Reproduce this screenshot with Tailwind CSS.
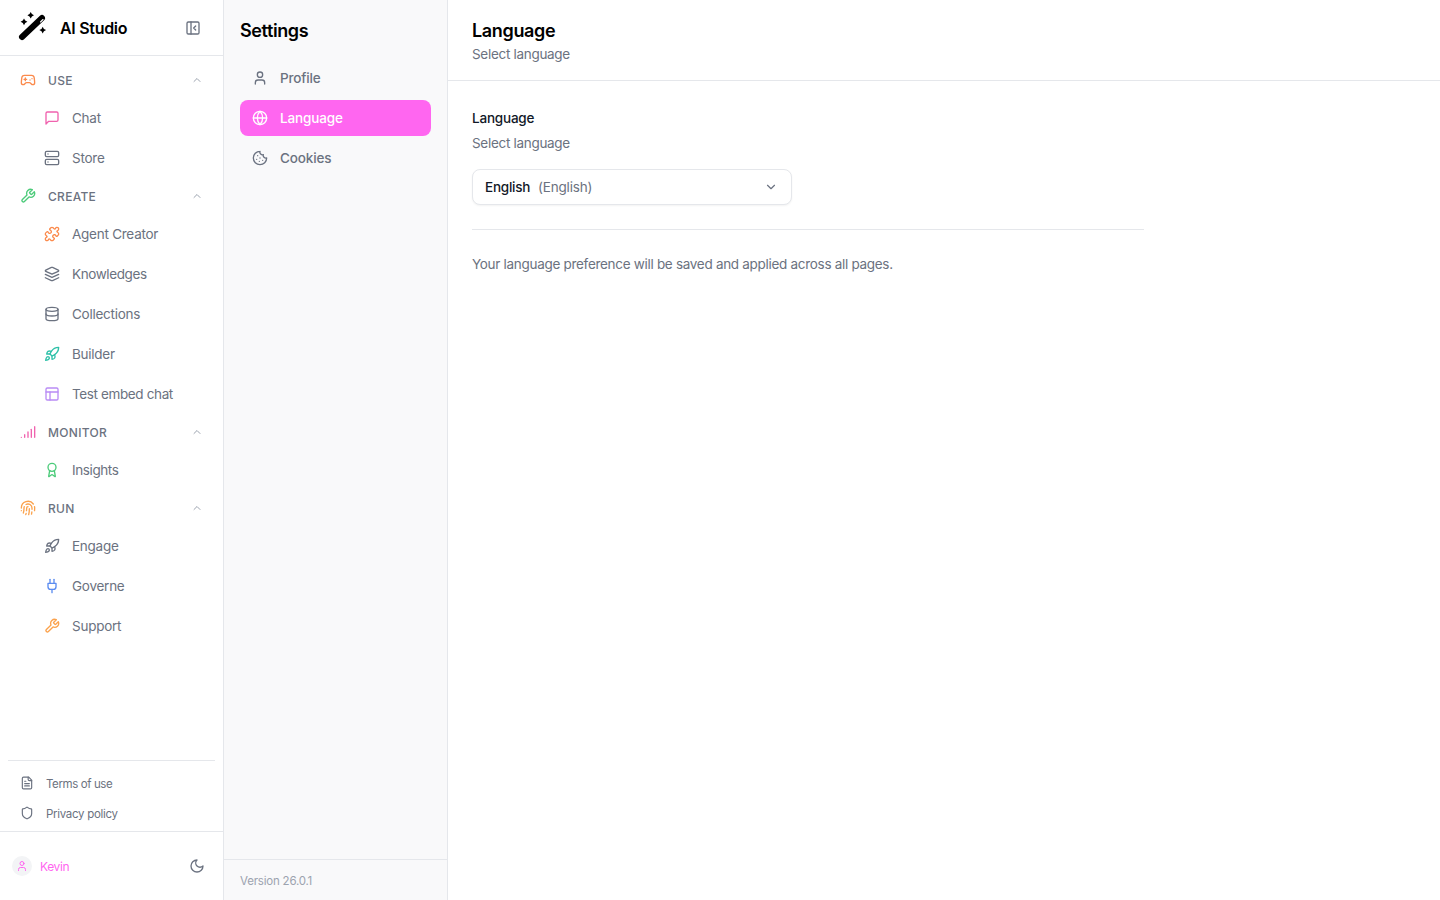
<!DOCTYPE html>
<html lang="en">
<head>
<meta charset="utf-8">
<title>AI Studio</title>
<script src="https://cdn.jsdelivr.net/npm/@tailwindcss/browser@4"></script>
</head>
<body class="bg-white">
<div class="flex h-[900px] w-[1440px] overflow-hidden bg-white font-['Inter',sans-serif] text-[#6b7280]">

  <!-- Main sidebar -->
  <aside class="flex h-full w-[224px] shrink-0 flex-col border-r border-[#e5e7eb] bg-white">
    <div class="flex h-[56px] shrink-0 items-center border-b border-[#e5e7eb] pl-[19px] pr-[22px]">
      <svg class="h-[28px] w-[28px] shrink-0 overflow-visible" viewBox="0 0 28 28" fill="#000">
        <path d="M3 23 23 4" stroke="#000" stroke-width="6" stroke-linecap="round"/>
        <path d="M21.5 8 24 5.5" stroke="#fff" stroke-width="1.1" stroke-linecap="round"/>
        <path d="M11.7-2 12.9.1 15 1.2 12.9 2.4 11.7 4.5 10.5 2.4 8.4 1.2 10.5.1Z"/>
        <path d="M5 4.4 6.2 6.6 8.4 7.8 6.2 9 5 11.2 3.8 9 1.6 7.8 3.8 6.6Z"/>
        <path d="M23.7 12.7 24.9 14.9 27.1 16 24.9 17.2 23.7 19.4 22.5 17.2 20.3 16 22.5 14.9Z"/>
      </svg>
      <span class="ml-[13px] text-[16px] font-semibold tracking-[-0.3px] text-black">AI Studio</span>
      <svg class="ml-auto h-[16px] w-[16px]" viewBox="0 0 24 24" fill="none" stroke="#6b7280" stroke-width="2" stroke-linecap="round" stroke-linejoin="round"><rect x="3" y="3" width="18" height="18" rx="2"/><path d="M9 3v18"/><path d="m16 15-3-3 3-3"/></svg>
    </div>

    <nav class="flex flex-1 flex-col pt-[6px]">
      <div class="flex h-[36px] items-center pl-[20px] pr-[20px]">
        <svg class="h-4 w-4" viewBox="0 0 24 24" fill="none" stroke="#fb8a4c" stroke-width="2" stroke-linecap="round" stroke-linejoin="round"><path d="M6 11h4"/><path d="M8 9v4"/><path d="M15 12h.01"/><path d="M18 10h.01"/><path d="M17.32 5H6.68a4 4 0 0 0-3.978 3.59c-.006.052-.01.101-.017.152C2.604 9.416 2 14.456 2 16a3 3 0 0 0 3 3c1 0 1.5-.5 2-1l1.414-1.414A2 2 0 0 1 9.828 16h4.344a2 2 0 0 1 1.414.586L17 18c.5.5 1 1 2 1a3 3 0 0 0 3-3c0-1.545-.604-6.584-.685-7.258-.007-.05-.011-.1-.017-.151A4 4 0 0 0 17.32 5z"/></svg>
        <span class="ml-3 pt-[2px] text-[12px] font-medium tracking-[0.3px] text-[#6b7280]">USE</span>
        <svg class="ml-auto h-3 w-3" viewBox="0 0 24 24" fill="none" stroke="#9ca3af" stroke-width="2" stroke-linecap="round" stroke-linejoin="round"><path d="m18 15-6-6-6 6"/></svg>
      </div>
      <a class="flex h-[40px] items-center pl-[44px] text-[13.5px] tracking-[-0.25px]">
        <svg class="mr-3 h-4 w-4 shrink-0" viewBox="0 0 24 24" fill="none" stroke="#f062ae" stroke-width="2" stroke-linecap="round" stroke-linejoin="round"><path d="M21 15a2 2 0 0 1-2 2H7l-4 4V5a2 2 0 0 1 2-2h14a2 2 0 0 1 2 2z"/></svg>Chat</a>
      <a class="flex h-[40px] items-center pl-[44px] text-[13.5px] tracking-[-0.25px]">
        <svg class="mr-3 h-4 w-4 shrink-0" viewBox="0 0 24 24" fill="none" stroke="#6b7280" stroke-width="2" stroke-linecap="round" stroke-linejoin="round"><rect x="2" y="2" width="20" height="8" rx="2"/><rect x="2" y="14" width="20" height="8" rx="2"/><path d="M6 6h.01"/><path d="M6 18h.01"/></svg>Store</a>

      <div class="flex h-[36px] items-center pl-[20px] pr-[20px]">
        <svg class="h-4 w-4" viewBox="0 0 24 24" fill="none" stroke="#4ccb7a" stroke-width="2" stroke-linecap="round" stroke-linejoin="round"><path d="M14.7 6.3a1 1 0 0 0 0 1.4l1.6 1.6a1 1 0 0 0 1.4 0l3.77-3.77a6 6 0 0 1-7.94 7.94l-6.91 6.91a2.12 2.12 0 0 1-3-3l6.91-6.91a6 6 0 0 1 7.94-7.94l-3.76 3.76z"/></svg>
        <span class="ml-3 pt-[2px] text-[12px] font-medium tracking-[0.3px]">CREATE</span>
        <svg class="ml-auto h-3 w-3" viewBox="0 0 24 24" fill="none" stroke="#9ca3af" stroke-width="2" stroke-linecap="round" stroke-linejoin="round"><path d="m18 15-6-6-6 6"/></svg>
      </div>
      <a class="flex h-[40px] items-center pl-[44px] text-[13.5px] tracking-[-0.25px]">
        <svg class="mr-3 h-4 w-4 shrink-0" viewBox="0 0 24 24" fill="none" stroke="#fb8a4c" stroke-width="2" stroke-linecap="round" stroke-linejoin="round"><path d="M19.439 7.85c-.049.322.059.648.289.878l1.568 1.568c.47.47.706 1.087.706 1.704s-.235 1.233-.706 1.704l-1.611 1.611a.98.98 0 0 1-.837.276c-.47-.07-.802-.48-.968-.925a2.501 2.501 0 1 0-3.214 3.214c.446.166.855.497.925.968a.979.979 0 0 1-.276.837l-1.61 1.61a2.404 2.404 0 0 1-1.705.707 2.402 2.402 0 0 1-1.704-.706l-1.568-1.568a1.026 1.026 0 0 0-.877-.29c-.493.074-.84.504-1.02.968a2.5 2.5 0 1 1-3.237-3.237c.464-.18.894-.527.967-1.02a1.026 1.026 0 0 0-.289-.877l-1.568-1.568A2.402 2.402 0 0 1 1.998 12c0-.617.236-1.234.706-1.704L4.23 8.77c.24-.24.581-.353.917-.303.515.077.877.528 1.073 1.01a2.5 2.5 0 1 0 3.259-3.259c-.482-.196-.933-.558-1.01-1.073-.05-.336.062-.676.303-.917l1.525-1.525A2.402 2.402 0 0 1 12 1.998c.617 0 1.234.236 1.704.706l1.568 1.568c.23.23.556.338.877.29.493-.074.84-.504 1.02-.968a2.5 2.5 0 1 1 3.237 3.237c-.464.18-.894.527-.967 1.02Z"/></svg>Agent Creator</a>
      <a class="flex h-[40px] items-center pl-[44px] text-[13.5px] tracking-[-0.4px]">
        <svg class="mr-3 h-4 w-4 shrink-0" viewBox="0 0 24 24" fill="none" stroke="#6b7280" stroke-width="2" stroke-linecap="round" stroke-linejoin="round"><path d="m12.83 2.18a2 2 0 0 0-1.66 0L2.6 6.08a1 1 0 0 0 0 1.83l8.58 3.91a2 2 0 0 0 1.66 0l8.58-3.9a1 1 0 0 0 0-1.83Z"/><path d="m22 17.65-9.17 4.16a2 2 0 0 1-1.66 0L2 17.65"/><path d="m22 12.65-9.17 4.16a2 2 0 0 1-1.66 0L2 12.65"/></svg>Knowledges</a>
      <a class="flex h-[40px] items-center pl-[44px] text-[13.5px] tracking-[-0.25px]">
        <svg class="mr-3 h-4 w-4 shrink-0" viewBox="0 0 24 24" fill="none" stroke="#6b7280" stroke-width="2" stroke-linecap="round" stroke-linejoin="round"><ellipse cx="12" cy="5" rx="9" ry="3"/><path d="M3 5V19A9 3 0 0 0 21 19V5"/><path d="M3 12A9 3 0 0 0 21 12"/></svg>Collections</a>
      <a class="flex h-[40px] items-center pl-[44px] text-[13.5px] tracking-[-0.25px]">
        <svg class="mr-3 h-4 w-4 shrink-0" viewBox="0 0 24 24" fill="none" stroke="#2dc0a8" stroke-width="2" stroke-linecap="round" stroke-linejoin="round"><path d="M4.5 16.5c-1.5 1.26-2 5-2 5s3.74-.5 5-2c.71-.84.7-2.13-.09-2.91a2.18 2.18 0 0 0-2.91-.09z"/><path d="m12 15-3-3a22 22 0 0 1 2-3.95A12.88 12.88 0 0 1 22 2c0 2.72-.78 7.5-6 11a22.35 22.35 0 0 1-4 2z"/><path d="M9 12H4s.55-3.03 2-4c1.62-1.08 5 0 5 0"/><path d="M12 15v5s3.03-.55 4-2c1.08-1.62 0-5 0-5"/></svg>Builder</a>
      <a class="flex h-[40px] items-center pl-[44px] text-[13.5px] tracking-[-0.37px]">
        <svg class="mr-3 h-4 w-4 shrink-0" viewBox="0 0 24 24" fill="none" stroke="#b98cf5" stroke-width="2" stroke-linecap="round" stroke-linejoin="round"><rect x="3" y="3" width="18" height="18" rx="2"/><path d="M3 9h18"/><path d="M9 21V9"/></svg>Test embed chat</a>

      <div class="flex h-[36px] items-center pl-[20px] pr-[20px]">
        <svg class="h-4 w-4" viewBox="0 0 24 24" fill="none" stroke="#f062ae" stroke-width="2" stroke-linecap="round" stroke-linejoin="round"><path d="M2 20h.01"/><path d="M7 20v-4"/><path d="M12 20v-8"/><path d="M17 20V8"/><path d="M22 4v16"/></svg>
        <span class="ml-3 pt-[2px] text-[12px] font-medium tracking-[0.3px]">MONITOR</span>
        <svg class="ml-auto h-3 w-3" viewBox="0 0 24 24" fill="none" stroke="#9ca3af" stroke-width="2" stroke-linecap="round" stroke-linejoin="round"><path d="m18 15-6-6-6 6"/></svg>
      </div>
      <a class="flex h-[40px] items-center pl-[44px] text-[13.5px] tracking-[-0.4px]">
        <svg class="mr-3 h-4 w-4 shrink-0" viewBox="0 0 24 24" fill="none" stroke="#4ccb7a" stroke-width="2" stroke-linecap="round" stroke-linejoin="round"><path d="m15.477 12.89 1.515 8.526a.5.5 0 0 1-.81.47l-3.58-2.687a1 1 0 0 0-1.197 0l-3.586 2.686a.5.5 0 0 1-.81-.469l1.514-8.526"/><circle cx="12" cy="8" r="6"/></svg>Insights</a>

      <div class="flex h-[36px] items-center pl-[20px] pr-[20px]">
        <svg class="h-4 w-4" viewBox="0 0 24 24" fill="none" stroke="#fba24c" stroke-width="2" stroke-linecap="round" stroke-linejoin="round"><path d="M12 10a2 2 0 0 0-2 2c0 1.02-.1 2.51-.26 4"/><path d="M14 13.12c0 2.38 0 6.38-1 8.88"/><path d="M17.29 21.02c.12-.6.43-2.3.5-3.02"/><path d="M2 12a10 10 0 0 1 18-6"/><path d="M2 16h.01"/><path d="M21.8 16c.2-2 .131-5.354 0-6"/><path d="M5 19.5C5.5 18 6 15 6 12a6 6 0 0 1 .34-2"/><path d="M8.65 22c.21-.66.45-1.32.57-2"/><path d="M9 6.8a6 6 0 0 1 9 5.2v2"/></svg>
        <span class="ml-3 pt-[2px] text-[12px] font-medium tracking-[0.3px]">RUN</span>
        <svg class="ml-auto h-3 w-3" viewBox="0 0 24 24" fill="none" stroke="#9ca3af" stroke-width="2" stroke-linecap="round" stroke-linejoin="round"><path d="m18 15-6-6-6 6"/></svg>
      </div>
      <a class="flex h-[40px] items-center pl-[44px] text-[13.5px] tracking-[-0.25px]">
        <svg class="mr-3 h-4 w-4 shrink-0" viewBox="0 0 24 24" fill="none" stroke="#6b7280" stroke-width="2" stroke-linecap="round" stroke-linejoin="round"><path d="M4.5 16.5c-1.5 1.26-2 5-2 5s3.74-.5 5-2c.71-.84.7-2.13-.09-2.91a2.18 2.18 0 0 0-2.91-.09z"/><path d="m12 15-3-3a22 22 0 0 1 2-3.95A12.88 12.88 0 0 1 22 2c0 2.72-.78 7.5-6 11a22.35 22.35 0 0 1-4 2z"/><path d="M9 12H4s.55-3.03 2-4c1.62-1.08 5 0 5 0"/><path d="M12 15v5s3.03-.55 4-2c1.08-1.62 0-5 0-5"/></svg>Engage</a>
      <a class="flex h-[40px] items-center pl-[44px] text-[13.5px] tracking-[-0.25px]">
        <svg class="mr-3 h-4 w-4 shrink-0" viewBox="0 0 24 24" fill="none" stroke="#5b8cf0" stroke-width="2" stroke-linecap="round" stroke-linejoin="round"><path d="M12 22v-5"/><path d="M9 8V2"/><path d="M15 8V2"/><path d="M18 8v5a4 4 0 0 1-4 4h-4a4 4 0 0 1-4-4V8Z"/></svg>Governe</a>
      <a class="flex h-[40px] items-center pl-[44px] text-[13.5px] tracking-[-0.25px]">
        <svg class="mr-3 h-4 w-4 shrink-0" viewBox="0 0 24 24" fill="none" stroke="#fba24c" stroke-width="2" stroke-linecap="round" stroke-linejoin="round"><path d="M14.7 6.3a1 1 0 0 0 0 1.4l1.6 1.6a1 1 0 0 0 1.4 0l3.77-3.77a6 6 0 0 1-7.94 7.94l-6.91 6.91a2.12 2.12 0 0 1-3-3l6.91-6.91a6 6 0 0 1 7.94-7.94l-3.76 3.76z"/></svg>Support</a>
    </nav>

    <div class="mx-2 border-t border-[#e5e7eb] pb-[2px] pt-[8px]">
      <a class="flex h-[30px] items-center pl-[12px] text-[11.5px] tracking-[-0.4px]">
        <svg class="mb-[2px] mr-[12px] h-[14px] w-[14px] shrink-0" viewBox="0 0 24 24" fill="none" stroke="#6b7280" stroke-width="2" stroke-linecap="round" stroke-linejoin="round"><path d="M15 2H6a2 2 0 0 0-2 2v16a2 2 0 0 0 2 2h12a2 2 0 0 0 2-2V7Z"/><path d="M14 2v4a2 2 0 0 0 2 2h4"/><path d="M10 9H8"/><path d="M16 13H8"/><path d="M16 17H8"/></svg><span class="pt-[2px]">Terms of use</span></a>
      <a class="flex h-[30px] items-center pl-[12px] text-[11.5px] tracking-[-0.3px]">
        <svg class="mb-[2px] mr-[12px] h-[14px] w-[14px] shrink-0" viewBox="0 0 24 24" fill="none" stroke="#6b7280" stroke-width="2" stroke-linecap="round" stroke-linejoin="round"><path d="M20 13c0 5-3.5 7.5-7.66 8.95a1 1 0 0 1-.67-.01C7.5 20.5 4 18 4 13V6a1 1 0 0 1 1-1c2 0 4.5-1.2 6.24-2.72a1.17 1.17 0 0 1 1.52 0C14.51 3.81 17 5 19 5a1 1 0 0 1 1 1z"/></svg><span class="pt-[2px]">Privacy policy</span></a>
    </div>
    <div class="flex h-[69px] shrink-0 items-center border-t border-[#e5e7eb] pl-[12px] pr-[18px]">
      <span class="flex h-[20px] w-[20px] items-center justify-center rounded-full bg-[#f3f4f6]">
        <svg class="h-[12px] w-[12px]" viewBox="0 0 24 24" fill="none" stroke="#ff66f0" stroke-width="2" stroke-linecap="round" stroke-linejoin="round"><path d="M19 21v-2a4 4 0 0 0-4-4H9a4 4 0 0 0-4 4v2"/><circle cx="12" cy="7" r="4"/></svg>
      </span>
      <span class="ml-2 pt-[2px] text-[12px] tracking-[-0.4px] text-[#ff66f0]">Kevin</span>
      <svg class="ml-auto h-4 w-4" viewBox="0 0 24 24" fill="none" stroke="#6b7280" stroke-width="2" stroke-linecap="round" stroke-linejoin="round"><path d="M12 3a6 6 0 0 0 9 9 9 9 0 1 1-9-9Z"/></svg>
    </div>
  </aside>

  <!-- Settings sidebar -->
  <aside class="flex h-full w-[224px] shrink-0 flex-col border-r border-[#e5e7eb] bg-[#f9f9fa]">
    <div class="flex flex-1 flex-col px-[16px]">
      <h2 class="flex h-[60px] items-center pt-px text-[18px] font-semibold tracking-[-0.4px] text-black">Settings</h2>
      <a class="flex h-[36px] w-[191px] items-center rounded-lg pl-[12px] text-[13.5px] font-medium tracking-[-0.15px]">
        <svg class="mr-3 h-4 w-4" viewBox="0 0 24 24" fill="none" stroke="#6b7280" stroke-width="2" stroke-linecap="round" stroke-linejoin="round"><path d="M19 21v-2a4 4 0 0 0-4-4H9a4 4 0 0 0-4 4v2"/><circle cx="12" cy="7" r="4"/></svg>Profile</a>
      <a class="mt-1 flex h-[36px] w-[191px] items-center rounded-lg bg-[#ff66f0] pl-[12px] text-[13.5px] font-medium tracking-[-0.15px] text-white">
        <svg class="mr-3 h-4 w-4" viewBox="0 0 24 24" fill="none" stroke="#ffffff" stroke-width="2" stroke-linecap="round" stroke-linejoin="round"><circle cx="12" cy="12" r="10"/><path d="M12 2a14.5 14.5 0 0 0 0 20 14.5 14.5 0 0 0 0-20"/><path d="M2 12h20"/></svg>Language</a>
      <a class="mt-1 flex h-[36px] w-[191px] items-center rounded-lg pl-[12px] text-[13.5px] font-medium tracking-[-0.15px]">
        <svg class="mr-3 h-4 w-4" viewBox="0 0 24 24" fill="none" stroke="#6b7280" stroke-width="2" stroke-linecap="round" stroke-linejoin="round"><path d="M12 2a10 10 0 1 0 10 10 4 4 0 0 1-5-5 4 4 0 0 1-5-5"/><path d="M8.5 8.5v.01"/><path d="M16 15.5v.01"/><path d="M12 12v.01"/><path d="M11 17v.01"/><path d="M7 14v.01"/></svg>Cookies</a>
    </div>
    <div class="flex h-[41px] shrink-0 items-center border-t border-[#e5e7eb] px-[16px] pt-[4px] text-[11.5px] tracking-[-0.2px] text-[#9ca3af]">Version 26.0.1</div>
  </aside>

  <!-- Content -->
  <main class="flex h-full min-w-0 flex-1 flex-col">
    <header class="flex h-[81px] shrink-0 flex-col border-b border-[#e5e7eb] pl-[24px] pt-[20px]">
      <h1 class="text-[18px] leading-[22px] font-semibold tracking-[-0.35px] text-black">Language</h1>
      <p class="mt-[2px] text-[13.5px] leading-[20px] tracking-[-0.3px]">Select language</p>
    </header>
    <section class="w-[720px] px-[24px] pt-[27px]">
      <h3 class="text-[13.5px] leading-[20px] font-medium tracking-[-0.2px] text-[#111827]">Language</h3>
      <p class="mt-[5px] text-[13.5px] leading-[20px] tracking-[-0.3px]">Select language</p>
      <div class="mt-[16px] flex h-[36px] w-[320px] items-center rounded-lg border border-[#e5e7eb] bg-white pl-[12px] pr-[13px] shadow-xs">
        <span class="text-[13.5px] font-medium tracking-[-0.25px] text-[#111827]">English</span>
        <span class="ml-2 text-[13.5px] tracking-[-0.2px]">(English)</span>
        <svg class="ml-auto h-[14px] w-[14px]" viewBox="0 0 24 24" fill="none" stroke="#6b7280" stroke-width="2" stroke-linecap="round" stroke-linejoin="round"><path d="m6 9 6 6 6-6"/></svg>
      </div>
      <div class="mt-[24px] border-t border-[#e5e7eb]"></div>
      <p class="mt-[24px] text-[13.5px] leading-[20px] tracking-[-0.3px]">Your language preference will be saved and applied across all pages.</p>
    </section>
  </main>
</div>
</body>
</html>
